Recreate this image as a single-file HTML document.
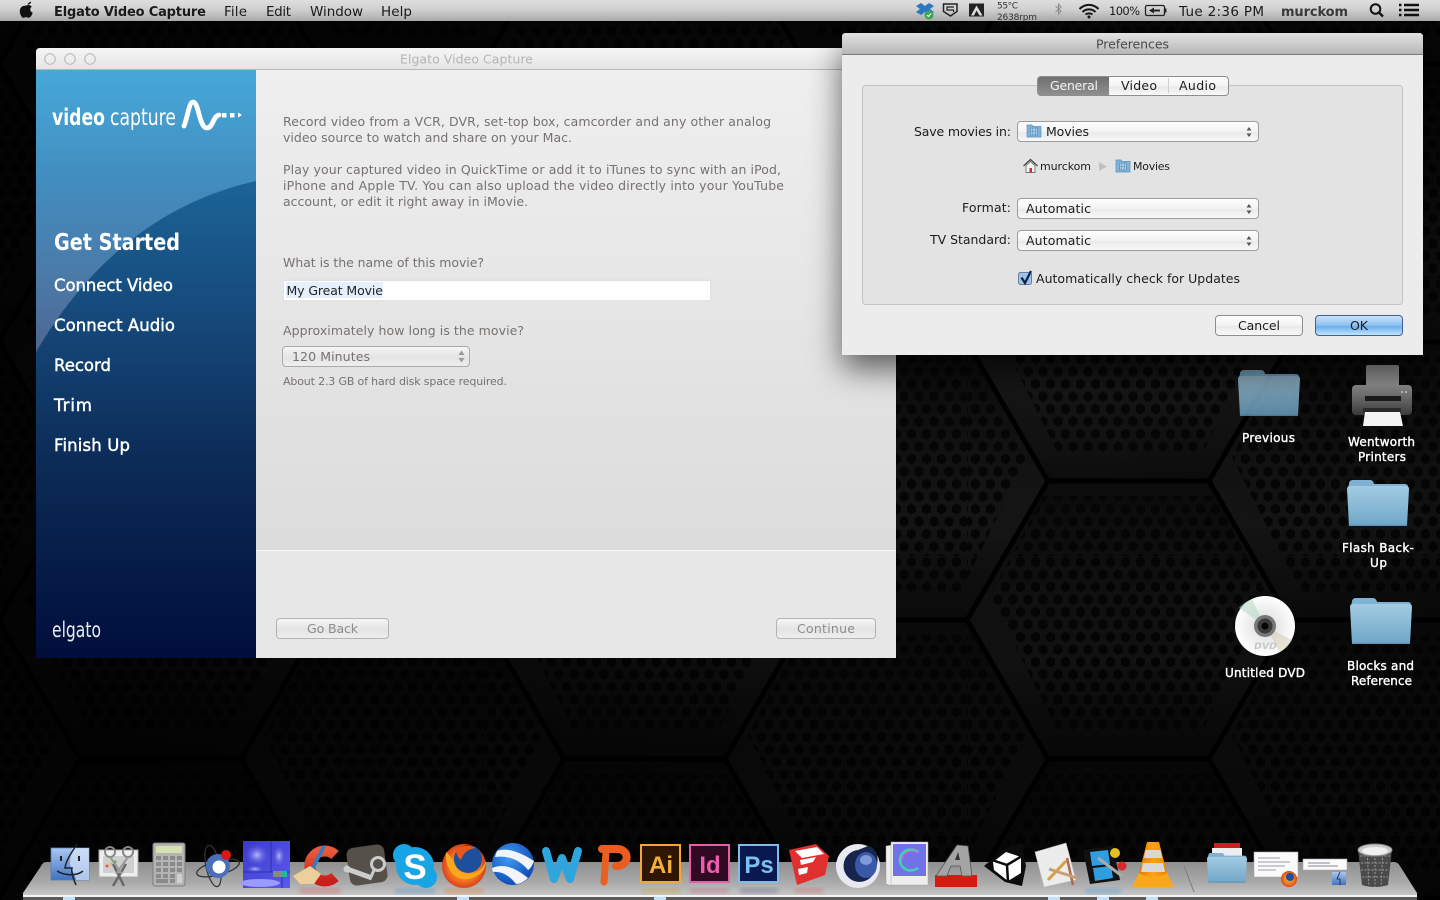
<!DOCTYPE html>
<html><head><meta charset="utf-8"><title>Elgato Video Capture</title>
<style>
html,body{margin:0;padding:0;background:#000;width:1440px;height:900px;overflow:hidden}
svg{display:block}
text{font-family:"DejaVu Sans","Liberation Sans",sans-serif;font-size:12.5px;white-space:pre}
.b{font-weight:bold}
.m{fill:#1a1a1a;font-size:13.5px}
.g{fill:#777270;font-size:12.5px}
.p{fill:#1c1c1c;font-size:12.5px}
.s{fill:#fff;stroke:#fff;stroke-width:.45px;font-size:16.5px}
.d{fill:#fff;stroke:#fff;stroke-width:.3px;font-size:12px}
</style></head><body>
<svg xmlns="http://www.w3.org/2000/svg" width="1440" height="900" viewBox="0 0 1440 900">
<defs>
<linearGradient id="cell" x1="0" y1="0" x2="0" y2="1"><stop offset="0" stop-color="#0c0c0c"/><stop offset=".65" stop-color="#171717"/><stop offset="1" stop-color="#0d0d0d"/></linearGradient>
<pattern id="holes" width="15" height="25" patternUnits="userSpaceOnUse">
<g fill="#060606"><polygon points="7.5,0.5 12,3.2 12,8.8 7.5,11.5 3,8.8 3,3.2"/><polygon points="0,13 4.5,15.7 4.5,21.3 0,24 -4.5,21.3 -4.5,15.7"/><polygon points="15,13 19.5,15.7 19.5,21.3 15,24 10.5,21.3 10.5,15.7"/></g>
</pattern>
<pattern id="hive" width="484" height="278" patternUnits="userSpaceOnUse">
<g fill="url(#cell)">
<polygon points="80,-75 241,-75 322,64 241,203 80,203 -1,64"/>
<polygon points="80,203 241,203 322,342 241,481 80,481 -1,342"/>
<polygon points="322,64 483,64 564,203 483,342 322,342 241,203"/>
<polygon points="322,-214 483,-214 564,-75 483,64 322,64 241,-75"/>
<polygon points="-162,64 -1,64 80,203 -1,342 -162,342 -243,203"/>
<polygon points="-162,-214 -1,-214 80,-75 -1,64 -162,64 -243,-75"/>
</g>
<g fill="url(#holes)">
<polygon points="75,-60 246,-60 300,40 235,175 90,175 22,40"/>
<polygon points="75,218 246,218 300,318 235,453 90,453 22,318"/>
<polygon points="317,79 488,79 542,179 477,314 332,314 264,179"/>
<polygon points="317,-199 488,-199 542,-99 477,36 332,36 264,-99"/>
<polygon points="-167,79 4,79 58,179 -7,314 -152,314 -220,179"/>
<polygon points="-167,-199 4,-199 58,-99 -7,36 -152,36 -220,-99"/>
</g>
<path d="M80,203H241L322,342H483L564,203M241,203L322,64H483L564,203M483,64L564,-75M80,203L-1,342M80,203L-1,64L80,-75M241,-75L322,64" fill="none" stroke="#000" stroke-width="5"/>
</pattern>
<radialGradient id="vig" gradientUnits="userSpaceOnUse" cx="1080" cy="440" r="1100" gradientTransform="translate(0 200) scale(1 .55)">
<stop offset="0" stop-color="#000" stop-opacity="0"/><stop offset=".3" stop-color="#000" stop-opacity=".2"/><stop offset=".6" stop-color="#000" stop-opacity=".55"/><stop offset="1" stop-color="#000" stop-opacity=".8"/>
</radialGradient>
<linearGradient id="menu" x1="0" y1="0" x2="0" y2="1"><stop offset="0" stop-color="#dedede"/><stop offset=".45" stop-color="#d0d0d0"/><stop offset="1" stop-color="#a9a9a9"/></linearGradient>
<linearGradient id="tb" x1="0" y1="0" x2="0" y2="1"><stop offset="0" stop-color="#f6f6f6"/><stop offset="1" stop-color="#e4e4e4"/></linearGradient>
<linearGradient id="tb2" x1="0" y1="0" x2="0" y2="1"><stop offset="0" stop-color="#e2e2e2"/><stop offset="1" stop-color="#b6b6b6"/></linearGradient>
<linearGradient id="cont" x1="0" y1="0" x2="0" y2="1"><stop offset="0" stop-color="#efefef"/><stop offset="1" stop-color="#dcdcdc"/></linearGradient>
<linearGradient id="sb1" gradientUnits="userSpaceOnUse" x1="0" y1="70" x2="0" y2="360"><stop offset="0" stop-color="#46a9d9"/><stop offset=".38" stop-color="#428dbf"/><stop offset=".7" stop-color="#4a7ba9"/><stop offset="1" stop-color="#4e6390"/></linearGradient>
<linearGradient id="sb2" gradientUnits="userSpaceOnUse" x1="0" y1="180" x2="0" y2="658"><stop offset="0" stop-color="#1c6497"/><stop offset=".27" stop-color="#164a7c"/><stop offset=".6" stop-color="#0c2a56"/><stop offset="1" stop-color="#010e3c"/></linearGradient>
<linearGradient id="btn" x1="0" y1="0" x2="0" y2="1"><stop offset="0" stop-color="#fff"/><stop offset=".5" stop-color="#f3f3f3"/><stop offset=".55" stop-color="#e9e9e9"/><stop offset="1" stop-color="#fafafa"/></linearGradient>
<linearGradient id="btnd" x1="0" y1="0" x2="0" y2="1"><stop offset="0" stop-color="#f6f6f6"/><stop offset=".55" stop-color="#e4e4e4"/><stop offset="1" stop-color="#eee"/></linearGradient>
<linearGradient id="ok" x1="0" y1="0" x2="0" y2="1"><stop offset="0" stop-color="#cfe4fa"/><stop offset=".5" stop-color="#8cc0f0"/><stop offset=".55" stop-color="#6aaef0"/><stop offset="1" stop-color="#c6e8fc"/></linearGradient>
<linearGradient id="tabsel" x1="0" y1="0" x2="0" y2="1"><stop offset="0" stop-color="#6f6f6f"/><stop offset="1" stop-color="#8f8f8f"/></linearGradient>
<linearGradient id="fold" x1="0" y1="0" x2="0" y2="1"><stop offset="0" stop-color="#a3cbe2"/><stop offset="1" stop-color="#6fa6c8"/></linearGradient>
<linearGradient id="shelf" x1="0" y1="0" x2="0" y2="1"><stop offset="0" stop-color="#8f8f8f"/><stop offset=".6" stop-color="#aaa"/><stop offset="1" stop-color="#c8c8c8"/></linearGradient>
<linearGradient id="find" x1="0" y1="0" x2="0" y2="1"><stop offset="0" stop-color="#aac8f2"/><stop offset="1" stop-color="#3f72c4"/></linearGradient>
<linearGradient id="daisy" x1="0" y1="0" x2="1" y2="1"><stop offset="0" stop-color="#3a3ac8"/><stop offset="1" stop-color="#5a5af0"/></linearGradient>
<radialGradient id="blob"><stop offset="0" stop-color="#b8b8ff"/><stop offset="1" stop-color="#4040d0" stop-opacity="0"/></radialGradient>
<radialGradient id="earth" cx=".4" cy=".35" r=".75"><stop offset="0" stop-color="#3f9cf0"/><stop offset="1" stop-color="#0a3fb0"/></radialGradient>
<radialGradient id="fox" cx=".5" cy=".5" r=".5"><stop offset="0" stop-color="#f9c22c"/><stop offset=".7" stop-color="#f2701e"/><stop offset="1" stop-color="#d8421a"/></radialGradient>
<linearGradient id="cone" x1="0" y1="0" x2="1" y2="0"><stop offset="0" stop-color="#e07800"/><stop offset=".5" stop-color="#ffa21a"/><stop offset="1" stop-color="#e88400"/></linearGradient>
<radialGradient id="disc" cx=".5" cy=".5" r=".5"><stop offset="0" stop-color="#999"/><stop offset=".4" stop-color="#e8e8e8"/><stop offset="1" stop-color="#fff"/></radialGradient>
<linearGradient id="print" x1="0" y1="0" x2="0" y2="1"><stop offset="0" stop-color="#8a8a8a"/><stop offset="1" stop-color="#3a3a3a"/></linearGradient>
<linearGradient id="ccred" x1="0" y1="0" x2="0" y2="1"><stop offset="0" stop-color="#e85a3a"/><stop offset="1" stop-color="#c81f1a"/></linearGradient>
<filter id="sh" x="-20%" y="-20%" width="140%" height="150%"><feDropShadow dx="0" dy="14" stdDeviation="16" flood-color="#000" flood-opacity=".6"/></filter>
<filter id="bl"><feGaussianBlur stdDeviation="2"/></filter>
<filter id="ts"><feDropShadow dx="0" dy="1" stdDeviation=".6" flood-color="#000" flood-opacity=".9"/></filter>
<symbol id="folder" viewBox="0 0 62 47" overflow="visible">
<path d="M2,5 Q2,1 6,1 H23 Q26,1 27,5 H58 Q61,5 61,8 V12 H1 V8Z" fill="#7fb2d2"/>
<path d="M0,10 Q0,7 3,7 H59 Q62,7 62,10 L60,47 H2Z" fill="url(#fold)"/>
<rect x="2" y="45.5" width="58" height="1.5" fill="#5f94b6"/>
</symbol>
<symbol id="mini" viewBox="0 0 16 14" overflow="visible">
<path d="M1,1H6L7,2.5H15V13H1Z" fill="#7db4dc" stroke="#5d8fb5" stroke-width=".7"/>
<rect x="4.5" y="4" width="7" height="7" fill="#a8cde8" stroke="#5d8fb5" stroke-width=".7"/>
<path d="M6.5,4V11M9.5,4V11M4.5,7.5H11.5" stroke="#5d8fb5" stroke-width=".6"/>
</symbol>
</defs>

<!-- desktop -->
<rect width="1440" height="900" fill="#0a0a0a"/>
<rect width="1440" height="900" fill="url(#hive)"/>
<rect width="1440" height="900" fill="url(#vig)"/>

<!-- desktop icons -->
<use href="#folder" x="1238" y="369" width="62" height="47" opacity=".8"/>
<use href="#folder" x="1347" y="479" width="62" height="47"/>
<use href="#folder" x="1350" y="597" width="62" height="47"/>
<g>
<rect x="1366" y="365" width="33" height="22" rx="2" fill="#8a8a8a"/>
<rect x="1352" y="385" width="60" height="30" rx="4" fill="url(#print)"/>
<rect x="1365" y="396" width="36" height="5" fill="#1a1a1a"/>
<rect x="1363" y="408" width="38" height="5" fill="#2b2b2b"/>
<path d="M1365,412H1400L1403,426H1363Z" fill="#f4f4f4"/>
<circle cx="1402" cy="392" r="1" fill="#ccc"/><circle cx="1406" cy="392" r="1" fill="#ccc"/>
</g>
<g>
<circle cx="1265" cy="626" r="30" fill="url(#disc)"/>
<path d="M1265,626L1239,608A30,30 0 0 1 1252,599Z" fill="#b8d8c8" opacity=".6"/>
<path d="M1265,626L1292,640A30,30 0 0 1 1280,652Z" fill="#d0c8b0" opacity=".5"/>
<circle cx="1265" cy="626" r="11" fill="#777"/><circle cx="1265" cy="626" r="7.5" fill="#3a3a3a"/><circle cx="1265" cy="626" r="3.5" fill="#050505"/>
<text x="1254" y="649" textLength="23" lengthAdjust="spacingAndGlyphs" style="font-size:9px;font-weight:bold;font-style:italic" fill="#c8c8c8">DVD</text>
</g>
<g filter="url(#ts)">
<text class="d" x="1242" y="442" textLength="53">Previous</text>
<text class="d" x="1348" y="446" textLength="67">Wentworth</text>
<text class="d" x="1358" y="461" textLength="48">Printers</text>
<text class="d" x="1342" y="552" textLength="72">Flash Back-</text>
<text class="d" x="1370" y="567" textLength="17">Up</text>
<text class="d" x="1225" y="677" textLength="80">Untitled DVD</text>
<text class="d" x="1347" y="670" textLength="67">Blocks and</text>
<text class="d" x="1351" y="685" textLength="61">Reference</text>
</g>

<!-- main window -->
<g>
<path d="M36,52Q36,48 40,48H892Q896,48 896,52V70H36Z" fill="url(#tb)"/>
<rect x="36" y="69" width="860" height="1" fill="#b8b8b8"/>
<g fill="none" stroke="#bdbdbd" stroke-width="1.2"><circle cx="50" cy="59" r="5.3"/><circle cx="70" cy="59" r="5.3"/><circle cx="90" cy="59" r="5.3"/></g>
<text x="400" y="63.500" textLength="133" fill="#b4b4b4" style="font-size:12.500px">Elgato Video Capture</text>
<rect x="36" y="70" width="220" height="588" fill="url(#sb1)"/>
<path d="M256,181Q118,212 36,352V658H256Z" fill="url(#sb2)"/>
<rect x="256" y="70" width="640" height="480" fill="url(#cont)"/>
<rect x="256" y="550" width="640" height="108" fill="#e7e7e7"/>
<rect x="256" y="550" width="640" height="1" fill="#f8f8f8"/>

<!-- logo -->
<text x="52" y="125" textLength="53" lengthAdjust="spacingAndGlyphs" fill="#fff" style="font-size:23px;font-weight:bold">video</text>
<text x="110" y="125" textLength="66" lengthAdjust="spacingAndGlyphs" fill="#fff" style="font-size:23px">capture</text>
<path d="M184,126C188,116 189,102 193,102C199,102 199,128 207,128C213,128 213,116 219,115" fill="none" stroke="#fff" stroke-width="4.800" stroke-linecap="round"/>
<rect x="222" y="113" width="4.500" height="4.500" fill="#fff"/><rect x="230" y="113" width="4.500" height="4.500" fill="#fff"/><path d="M238,112.500L242,115L238,117.500Z" fill="#fff"/>

<text x="54" y="250" textLength="126" lengthAdjust="spacingAndGlyphs" fill="#fff" style="font-size:23px;font-weight:bold">Get Started</text>
<text class="s" x="54" y="291" textLength="119">Connect Video</text>
<text class="s" x="54" y="331" textLength="121">Connect Audio</text>
<text class="s" x="54" y="371" textLength="57">Record</text>
<text class="s" x="54" y="411" textLength="38">Trim</text>
<text class="s" x="54" y="451" textLength="76">Finish Up</text>
<text x="52" y="637" textLength="49" lengthAdjust="spacingAndGlyphs" fill="#e8ecf2" style="font-size:21px">elgato</text>

<text class="g" x="283" y="126" textLength="488">Record video from a VCR, DVR, set-top box, camcorder and any other analog</text>
<text class="g" x="283" y="142" textLength="289">video source to watch and share on your Mac.</text>
<text class="g" x="283" y="174" textLength="498">Play your captured video in QuickTime or add it to iTunes to sync with an iPod,</text>
<text class="g" x="283" y="190" textLength="501">iPhone and Apple TV. You can also upload the video directly into your YouTube</text>
<text class="g" x="283" y="206" textLength="245">account, or edit it right away in iMovie.</text>
<text class="g" x="283" y="267" textLength="201">What is the name of this movie?</text>
<rect x="283" y="279.500" width="428" height="21" fill="#e0e0e0"/>
<rect x="284" y="281" width="426" height="19" fill="#fff"/>
<rect x="286" y="282" width="97" height="16" fill="#e6f0fd"/>
<text x="286.500" y="295" textLength="96.500" fill="#222" style="font-size:12.500px">My Great Movie</text>
<text class="g" x="283" y="335" textLength="241">Approximately how long is the movie?</text>
<rect x="282.500" y="346.500" width="187" height="20" rx="3.500" fill="url(#btnd)" stroke="#aaa"/>
<text class="g" x="292" y="361" textLength="78">120 Minutes</text>
<path d="M458.500,355L461.500,350.500L464.500,355ZM458.500,358L461.500,362.500L464.500,358Z" fill="#999"/>
<text class="g" x="283" y="385" textLength="224" style="font-size:11px">About 2.3 GB of hard disk space required.</text>
<rect x="276.500" y="618.500" width="112" height="20" rx="3.500" fill="url(#btnd)" stroke="#b4b4b4"/>
<text x="307" y="633" textLength="51" fill="#8c8c8c">Go Back</text>
<rect x="776.500" y="618.500" width="99" height="20" rx="3.500" fill="url(#btnd)" stroke="#b4b4b4"/>
<text x="797" y="633" textLength="58" fill="#8c8c8c">Continue</text>
</g>

<!-- preferences -->
<g filter="url(#sh)">
<path d="M842,37Q842,33 846,33H1419Q1423,33 1423,37V355H842Z" fill="#ececec"/>
</g>
<path d="M842,37Q842,33 846,33H1419Q1423,33 1423,37V54H842Z" fill="url(#tb2)"/>
<rect x="842" y="54" width="581" height="1" fill="#7a7a7a"/>
<text x="1096" y="48.500" textLength="73" fill="#4a4a4a">Preferences</text>
<rect x="862.500" y="85.500" width="540" height="219" rx="3" fill="#e3e3e3" stroke="#c2c2c2"/>
<rect x="1037.500" y="76.500" width="191" height="19" rx="3.500" fill="url(#btn)" stroke="#8e8e8e"/>
<path d="M1041,77H1109V95H1041Q1038,95 1038,92V80Q1038,77 1041,77Z" fill="url(#tabsel)"/>
<rect x="1168" y="78" width="1" height="15" fill="#cfcfcf"/>
<text x="1050" y="90" textLength="48" fill="#f2f2f2">General</text>
<text class="p" x="1121" y="90" textLength="36">Video</text>
<text class="p" x="1179" y="90" textLength="37">Audio</text>

<text class="p" x="914" y="136" textLength="97">Save movies in:</text>
<rect x="1017.500" y="121.500" width="241" height="20" rx="3.500" fill="url(#btn)" stroke="#9c9c9c"/>
<use href="#mini" x="1026" y="124" width="16" height="14"/>
<text class="p" x="1046" y="136" textLength="43">Movies</text>
<path d="M1246.500,130.500L1249,127L1251.500,130.500ZM1246.500,133.500L1249,137L1251.500,133.500Z" fill="#555"/>

<path d="M1023.500,166L1030.500,159.500L1037.500,166" fill="none" stroke="#444" stroke-width="1.200"/>
<path d="M1026,165.500V172.500H1035V165.500L1030.500,161.500Z" fill="#f2f2f2" stroke="#555" stroke-width=".7"/>
<rect x="1029.500" y="168" width="2.500" height="4.500" fill="#b33a2a"/>
<text x="1040" y="170" textLength="51" fill="#1c1c1c" style="font-size:11px">murckom</text>
<path d="M1099,162L1107,166.500L1099,171Z" fill="#c2c2c2"/>
<use href="#mini" x="1115" y="159" width="16" height="14"/>
<text x="1133" y="170" textLength="37" fill="#1c1c1c" style="font-size:11px">Movies</text>

<text class="p" x="962" y="212" textLength="49">Format:</text>
<rect x="1017.500" y="198.500" width="241" height="20" rx="3.500" fill="url(#btn)" stroke="#9c9c9c"/>
<text class="p" x="1026" y="213" textLength="65">Automatic</text>
<path d="M1246.500,207.500L1249,204L1251.500,207.500ZM1246.500,210.500L1249,214L1251.500,210.500Z" fill="#555"/>
<text class="p" x="930" y="244" textLength="81">TV Standard:</text>
<rect x="1017.500" y="230.500" width="241" height="20" rx="3.500" fill="url(#btn)" stroke="#9c9c9c"/>
<text class="p" x="1026" y="245" textLength="65">Automatic</text>
<path d="M1246.500,239.500L1249,236L1251.500,239.500ZM1246.500,242.500L1249,246L1251.500,242.500Z" fill="#555"/>

<rect x="1018.500" y="272.500" width="13" height="12" rx="2" fill="#9cc4ec" stroke="#6a7f96"/>
<path d="M1021.500,277.500L1025,283L1031,271" fill="none" stroke="#102040" stroke-width="2.200"/>
<text class="p" x="1036" y="283" textLength="204">Automatically check for Updates</text>

<rect x="1215.500" y="315.500" width="87" height="20" rx="3.500" fill="url(#btn)" stroke="#8e8e8e"/>
<text class="p" x="1238" y="330" textLength="42">Cancel</text>
<rect x="1315.500" y="315.500" width="87" height="20" rx="3.500" fill="url(#ok)" stroke="#3f5f96"/>
<text class="p" x="1350" y="330" textLength="18">OK</text>

<!-- menu bar -->
<rect width="1440" height="21" fill="url(#menu)"/>
<path d="M27.500,4.500C28,3 29.500,2 31,1.500C31.200,3.200 29.500,4.800 27.500,4.500ZM24.800,5.800C26.200,5.800 27,5 28.300,5C29.800,5 31,5.700 31.800,6.800C29.300,8.300 30,11.800 32.700,12.800C32,15 30.500,17.800 28.800,17.800C27.800,17.800 27.300,17.100 26,17.100C24.700,17.100 24.200,17.800 23.300,17.800C21.700,17.800 19.800,14.200 19.800,11.200C19.800,8 22,5.800 24.800,5.800Z" fill="#111"/>
<text class="m b" x="54" y="16" textLength="152" style="font-size:13px">Elgato Video Capture</text>
<text class="m" x="224" y="16" textLength="23">File</text>
<text class="m" x="266" y="16" textLength="25">Edit</text>
<text class="m" x="310" y="16" textLength="53">Window</text>
<text class="m" x="381" y="16" textLength="31">Help</text>
<!-- status icons -->
<path d="M916,6L921,3L925,6L929,3L934,6L930,9L934,12L929,15L925,12L921,15L916,12L920,9Z" fill="#2a78c0"/>
<circle cx="929" cy="15" r="4.500" fill="#3aa84a"/>
<path d="M927,15L928.500,16.500L931,13.500" fill="none" stroke="#fff"/>
<path d="M943.500,4H957V11.500L950.500,16L943.500,11.500Z" fill="none" stroke="#222" stroke-width="1.500"/>
<path d="M954,7H947V10H953.500V12" fill="none" stroke="#222" stroke-width="1.200"/>
<rect x="969" y="3.500" width="15" height="13" fill="#222"/>
<path d="M976.500,5.500L971,15.500H974L976.500,10.500L979.500,15.500H982.500Z" fill="#ddd"/>
<text x="997" y="8.500" textLength="21" fill="#333" style="font-size:9px">55°C</text>
<text x="997" y="20" textLength="40" fill="#333" style="font-size:9px">2638rpm</text>
<path d="M1055.500,6L1061,11L1058.500,14V4L1061,7L1055.500,12" fill="none" stroke="#8a8a8a"/>
<path d="M1079.500,9C1085,3.500 1093,3.500 1098.500,9M1082.500,12C1086,8.500 1092,8.500 1095.500,12M1085.500,14.500C1087.500,13 1090.500,13 1092.500,14.500" fill="none" stroke="#151515" stroke-width="2"/>
<circle cx="1089" cy="17" r="1.500" fill="#151515"/>
<text x="1109" y="15" textLength="31" fill="#1a1a1a" style="font-size:11.500px">100%</text>
<rect x="1145.500" y="5.500" width="19" height="10" rx="1.500" fill="none" stroke="#222" stroke-width="1.300"/>
<rect x="1165" y="8.500" width="1.500" height="4" fill="#222"/>
<path d="M1149,10.500L1154,7.500V9.500H1160V11.500H1154V13.500Z" fill="#222"/>
<text class="m" x="1179" y="16" textLength="85">Tue 2:36 PM</text>
<text class="m" x="1281" y="16" textLength="67" style="font-weight:bold;fill:#3a3a3a;font-size:13px">murckom</text>
<circle cx="1375.500" cy="9" r="4.800" fill="none" stroke="#111" stroke-width="2"/>
<path d="M1379,12.500L1383,16.500" stroke="#111" stroke-width="2.400"/>
<path d="M1399,5H1401.500M1399,10H1401.500M1399,15H1401.500M1404,5H1419M1404,10H1419M1404,15H1419" stroke="#111" stroke-width="2.400"/>

<!-- dock shelf -->
<path d="M46,862H1394Q1398,862 1400,866L1417,893V896H23V893L41,866Q43,862 46,862Z" fill="url(#shelf)"/>
<rect x="23" y="895" width="1394" height="2" fill="#f4f4f4"/>
<rect x="23" y="897" width="1394" height="3" fill="#5a5a5a"/>
<path d="M1184,866L1194,892" stroke="#7d7d7d"/>
<g fill="#bfe2ff"><rect x="63" y="897" width="12" height="3"/><rect x="457" y="897" width="12" height="3"/><rect x="654" y="897" width="12" height="3"/><rect x="1048" y="897" width="12" height="3"/><rect x="1097" y="897" width="12" height="3"/><rect x="1146" y="897" width="12" height="3"/></g>
<!-- reflections -->
<g filter="url(#bl)" opacity=".3">
<rect x="300" y="888" width="40" height="6" fill="#d44"/><rect x="395" y="888" width="40" height="6" fill="#38c"/><rect x="445" y="888" width="38" height="6" fill="#e72"/><rect x="642" y="888" width="38" height="5" fill="#c90"/><rect x="690" y="888" width="38" height="5" fill="#c47"/><rect x="740" y="888" width="38" height="5" fill="#448"/><rect x="795" y="888" width="28" height="5" fill="#d44"/><rect x="1085" y="888" width="36" height="6" fill="#39d"/>
</g>

<!-- Finder -->
<rect x="51" y="848" width="38" height="32" fill="url(#find)" stroke="#5a7fb8" stroke-width=".8"/>
<path d="M72,848H89V880H76C74,872 70,868 70,862Z" fill="#d5e4f8" opacity=".75"/>
<path d="M77,844C72,852 66,860 65,868H72C71,872 73,878 76,885" fill="none" stroke="#222" stroke-width="1.500"/>
<path d="M57,871C65,876 77,876 83,871" fill="none" stroke="#222" stroke-width="1.500"/>
<rect x="60" y="856" width="2" height="5" fill="#222"/><rect x="78" y="856" width="2" height="5" fill="#222"/>
<!-- Grab -->
<rect x="99" y="850" width="39" height="27" fill="#eee" stroke="#aaa"/>
<rect x="103" y="856" width="31" height="17" fill="#cfcfcf"/>
<circle cx="107" cy="866" r="1.500" fill="#f05050"/><circle cx="111" cy="864" r="1.500" fill="#e0c040"/><circle cx="115" cy="862" r="1.500" fill="#50b050"/>
<path d="M113,864L124,886M126,864L113,886" stroke="#666" stroke-width="2.400"/>
<circle cx="110" cy="852" r="5" fill="none" stroke="#888" stroke-width="2"/><circle cx="128" cy="852" r="5" fill="none" stroke="#888" stroke-width="2"/>
<path d="M110,857L122,874M128,857L116,874" stroke="#999" stroke-width="2"/>
<!-- Calculator -->
<rect x="153" y="843" width="32" height="43" rx="2" fill="#b4b4b4" stroke="#7d7d7d"/>
<rect x="156" y="846" width="26" height="7" fill="#d4e0b0"/>
<g fill="#8a8a8a"><rect x="156" y="856" width="5" height="4"/><rect x="163" y="856" width="5" height="4"/><rect x="170" y="856" width="5" height="4"/><rect x="177" y="856" width="5" height="4"/><rect x="156" y="862" width="5" height="4"/><rect x="163" y="862" width="5" height="4"/><rect x="170" y="862" width="5" height="4"/><rect x="177" y="862" width="5" height="4"/><rect x="156" y="868" width="5" height="4"/><rect x="163" y="868" width="5" height="4"/><rect x="170" y="868" width="5" height="4"/><rect x="177" y="868" width="5" height="4"/><rect x="156" y="874" width="5" height="4"/><rect x="163" y="874" width="5" height="4"/><rect x="170" y="874" width="5" height="4"/><rect x="156" y="879" width="12" height="4"/><rect x="170" y="879" width="5" height="4"/></g>
<rect x="177" y="874" width="5" height="9" fill="#d0d0d0"/>
<!-- MacVim-ish -->
<ellipse cx="218" cy="868" rx="22" ry="7" fill="none" stroke="#333" stroke-width="1.300" transform="rotate(-15 218 868)"/>
<ellipse cx="213" cy="866" rx="7" ry="21" fill="none" stroke="#333" stroke-width="1.200" transform="rotate(-12 213 866)"/>
<circle cx="218" cy="866" r="12" fill="#4a6fb8"/><circle cx="219" cy="867" r="6.500" fill="#fff"/>
<circle cx="226" cy="855" r="5" fill="#d81818"/>
<!-- DaisyDisk -->
<rect x="243" y="841" width="47" height="47" fill="url(#daisy)"/>
<ellipse cx="257" cy="855" rx="13" ry="12" fill="url(#blob)"/><ellipse cx="279" cy="856" rx="7" ry="12" fill="url(#blob)"/><ellipse cx="255" cy="869" rx="10" ry="4" fill="url(#blob)"/><ellipse cx="260" cy="883" rx="20" ry="4" fill="#9a9aff"/>
<path d="M271,841V872H243M271,872H290M282,872V888" stroke="#2a2a9a" fill="none" stroke-width=".8"/>
<rect x="273" y="871" width="8" height="6" fill="#888"/><rect x="281" y="871" width="6" height="6" fill="#1fb8a8"/>
<!-- CCleaner -->
<path d="M335,855A15,15 0 1 0 335,877" fill="none" stroke="url(#ccred)" stroke-width="11"/>
<path d="M311,872L324,846" stroke="#2a7fc8" stroke-width="3.500"/>
<path d="M310,866L321,874L314,884L300,884L293,876Z" fill="#eccf9a"/>
<!-- Steam -->
<rect x="348" y="846" width="38" height="38" rx="7" fill="#555049" transform="rotate(-8 367 865)"/>
<path d="M347,869L372,878" stroke="#ccc" stroke-width="5"/>
<circle cx="347" cy="869" r="3.500" fill="#ccc"/>
<circle cx="378" cy="864" r="6.500" fill="none" stroke="#ccc" stroke-width="3"/>
<path d="M374,870L371,877" stroke="#ccc" stroke-width="3"/>
<!-- Skype -->
<circle cx="415" cy="866" r="19" fill="#17a5e6"/><circle cx="404" cy="855" r="11" fill="#17a5e6"/><circle cx="426" cy="877" r="11" fill="#17a5e6"/>
<text x="415" y="879" text-anchor="middle" fill="#fff" style="font-size:35px;font-weight:bold;font-family:'Liberation Sans',sans-serif">S</text>
<!-- Firefox -->
<circle cx="464" cy="866" r="22" fill="url(#fox)"/>
<circle cx="468" cy="859" r="14" fill="#1c4f9c"/>
<path d="M446,852C444,868 456,884 472,878C482,875 486,868 486,860C484,870 472,878 460,872C454,868 454,858 446,852Z" fill="#f7a81e"/>
<path d="M456,850C460,846 468,844 476,848C468,849 463,853 461,860C458,858 456,854 456,850Z" fill="#e8561a"/>
<!-- Earth -->
<circle cx="513" cy="864" r="21" fill="url(#earth)"/>
<path d="M497,851C506,847 520,852 534,861C532,866 530,869 528,870C520,860 508,855 495,857Z" fill="#f2f4fa"/>
<path d="M492,868C504,863 516,868 528,878C524,882 520,884 516,884C510,876 502,871 493,872Z" fill="#f2f4fa"/>
<!-- W -->
<path d="M546,851L554,879L562,858L570,879L578,851" fill="none" stroke="#2fa5de" stroke-width="8" stroke-linejoin="round" stroke-linecap="round"/>
<!-- P -->
<path d="M602,849H617C630,849 630,866 616,866" fill="none" stroke="#ea5c20" stroke-width="8" stroke-linecap="round"/>
<path d="M606,852L604,882" stroke="#e8601f" stroke-width="7" stroke-linecap="round"/>
<!-- Ai Id Ps -->
<rect x="641" y="845" width="39" height="37" fill="#2e1603" stroke="#f5a82e" stroke-width="2"/>
<text x="661" y="873" text-anchor="middle" fill="#f4ae3a" style="font-size:24px;font-weight:bold;font-family:'Liberation Sans',sans-serif">Ai</text>
<rect x="690" y="845" width="39" height="37" fill="#2f0a22" stroke="#e85ca8" stroke-width="2"/>
<text x="710" y="873" text-anchor="middle" fill="#ea5eab" style="font-size:24px;font-weight:bold;font-family:'Liberation Sans',sans-serif">Id</text>
<rect x="739" y="845" width="39" height="37" fill="#0a1850" stroke="#80bcea" stroke-width="2"/>
<text x="759" y="873" text-anchor="middle" fill="#7cc0ee" style="font-size:24px;font-weight:bold;font-family:'Liberation Sans',sans-serif">Ps</text>
<!-- SketchUp -->
<path d="M789,850L816,844L829,856L825,875L797,885Z" fill="#e02f2f"/>
<path d="M795,851L817,847L824,854L802,858ZM800,860L816,857L813,862L801,865ZM798,869L808,867L807,873L799,875Z" fill="#fff"/>
<!-- C4D -->
<circle cx="858" cy="866" r="22" fill="#e8eaf0"/>
<path d="M858,850A16,16 0 1 0 875,870C880,860 878,848 868,846Z" fill="#16244e"/>
<ellipse cx="866" cy="865" rx="11" ry="13" fill="#3a58a8"/>
<ellipse cx="866" cy="860" rx="6" ry="5" fill="#7f9ad8"/>
<!-- C stack -->
<path d="M886,846L892,845V886L886,884Z" fill="#eee" stroke="#999" stroke-width=".5"/>
<rect x="891" y="842" width="37" height="43" fill="#eee" stroke="#aaa" stroke-width=".5"/>
<rect x="893" y="844" width="33" height="32" fill="#7272e8"/>
<path d="M918,852C908,846 900,853 900,860C900,868 909,874 918,868" fill="none" stroke="#39d6b0" stroke-width="2.500"/>
<path d="M919,853C910,848 902,854 902,860" fill="none" stroke="#e060d0" stroke-width="1.200"/>
<!-- Autodesk -->
<rect x="935" y="875" width="42" height="12" fill="#d8190f"/>
<path d="M936,876L957,845L968,846L972,876H962L960,866H951L947,876Z" fill="#a4a4a4" stroke="#555" stroke-width=".8"/>
<path d="M955,860L958,852L960,860Z" fill="#333"/>
<!-- Unity -->
<path d="M984,866L1005,849L1022,843L1026,866L1022,886L1005,882Z" fill="#0c0c0c"/>
<path d="M993,862L1006,852L1021,857V873L1008,881L994,870Z" fill="#fff"/>
<path d="M992,860L1007,865L1022,856M1007,865L1008,882" stroke="#0c0c0c" stroke-width="2.500" fill="none"/>
<!-- Script editor-like -->
<path d="M1035,852L1066,843L1076,880L1044,887Z" fill="#ececec" stroke="#bbb" stroke-width=".6"/>
<path d="M1048,880L1066,861" stroke="#d8a040" stroke-width="3"/>
<path d="M1067,858L1073,885" stroke="#b0694a" stroke-width="2.500"/>
<path d="M1049,869L1077,878" stroke="#c8a078" stroke-width="3"/>
<!-- video + tools -->
<path d="M1083,850L1113,846L1120,880L1090,884Z" fill="#111"/>
<path d="M1090,852L1108,850L1110,864L1092,866ZM1093,868L1111,866L1113,878L1095,881Z" fill="#2e9ee0"/>
<path d="M1098,858L1122,876" stroke="#aaa" stroke-width="3"/>
<circle cx="1115" cy="853" r="5" fill="#e6c020"/><circle cx="1122" cy="866" r="4.500" fill="#d82828"/>
<!-- VLC -->
<path d="M1147,842H1159L1168,877H1138Z" fill="url(#cone)"/>
<path d="M1145.500,850H1160.500L1162,858H1144ZM1143,863H1163L1165,872H1141Z" fill="#d8d8d8"/>
<path d="M1139,873L1132,887H1174L1167,873C1160,878 1146,878 1139,873Z" fill="#f8a818"/>
<!-- Stack folder -->
<rect x="1214" y="843" width="26" height="12" fill="#cc2020"/>
<rect x="1212" y="848" width="30" height="10" fill="#eee"/>
<use href="#folder" x="1207" y="852" width="40" height="31"/>
<!-- doc stacks -->
<rect x="1254" y="852" width="44" height="25" fill="#fafafa" stroke="#aaa" stroke-width=".6"/>
<path d="M1258,858H1280M1258,862H1290M1258,866H1285M1258,870H1276" stroke="#99a" stroke-width="1"/>
<circle cx="1289" cy="879" r="8" fill="url(#fox)"/><circle cx="1290" cy="877" r="4" fill="#1c4f9c"/>
<rect x="1303" y="859" width="44" height="11" fill="#fafafa" stroke="#aaa" stroke-width=".6"/>
<path d="M1308,863H1330M1308,866H1338" stroke="#889" stroke-width="1"/>
<rect x="1332" y="872" width="14" height="13" fill="url(#find)"/><path d="M1340,872L1337,879H1340V885" stroke="#222" fill="none" stroke-width=".8"/>
<!-- Trash -->
<path d="M1358,850H1392L1388,885Q1375,889 1362,885Z" fill="#4a4a4a"/>
<path d="M1360,856H1390M1361,863H1389M1361,870H1389M1362,877H1388M1367,851L1369,886M1375,851V887M1383,851L1381,886" stroke="#999" stroke-width="1" stroke-dasharray="2 1.500"/>
<ellipse cx="1375" cy="850" rx="17" ry="6" fill="#c9c9c9" stroke="#888"/>
<ellipse cx="1375" cy="851" rx="13" ry="4" fill="#efefef"/>
</svg>
</body></html>
